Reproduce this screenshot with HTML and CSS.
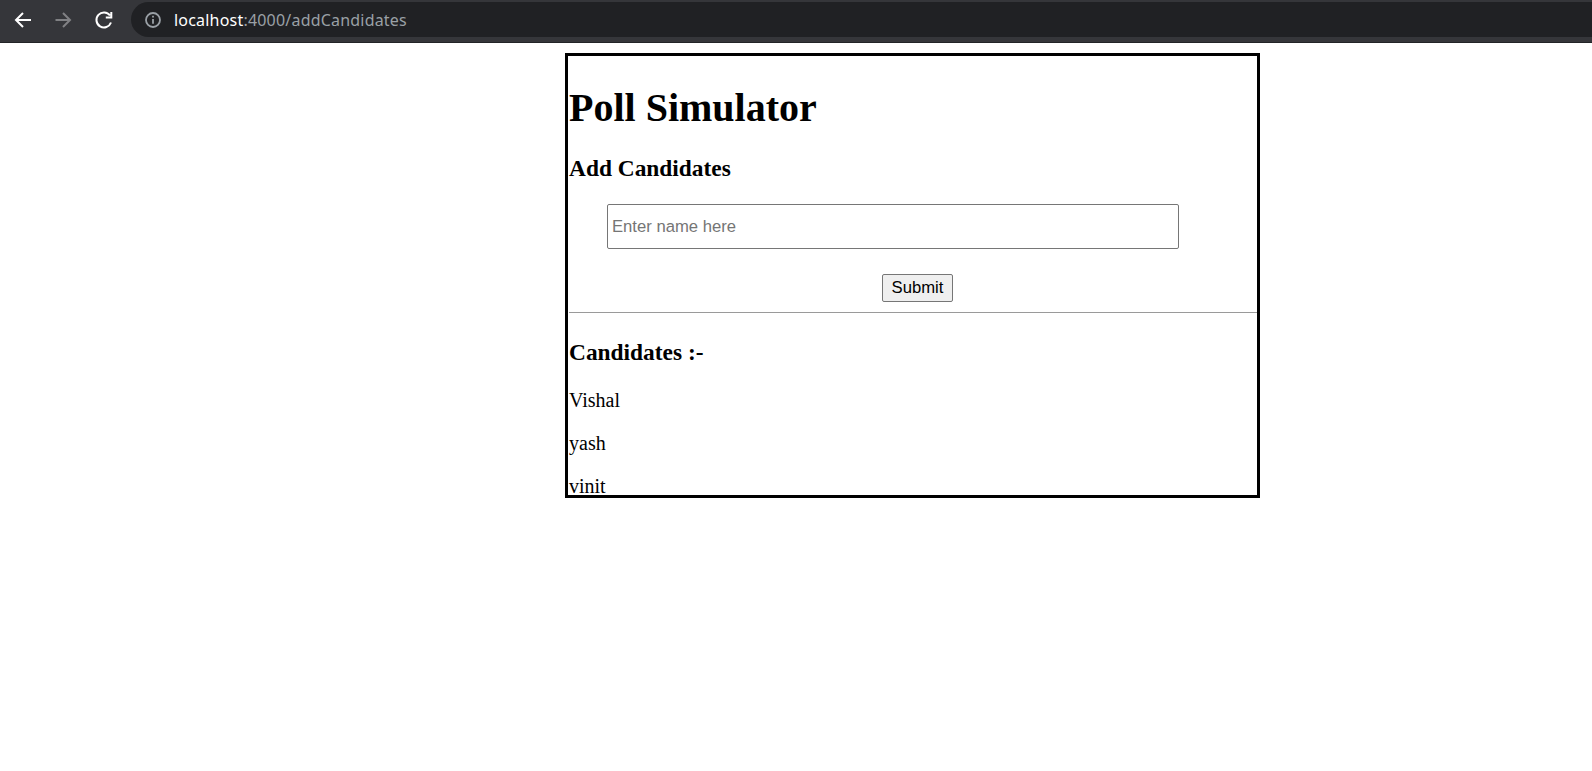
FILE: index.html
```html
<!DOCTYPE html>
<html lang="en">
<head>
    <meta charset="UTF-8">
    <title>Poll Simulator</title>
    <link rel="stylesheet" href="styles.css">
</head>
<body>

    <!-- Browser toolbar -->
    <header class="toolbar">
        <svg class="nav-icon" viewBox="0 0 20 20"><path d="M18 10H3.500M10 3 3 10l7 7"/></svg>
        <svg class="nav-icon nav-icon-off" viewBox="0 0 20 20"><path d="M2.500 10H17M10 3l7 7-7 7"/></svg>
        <svg class="nav-icon" viewBox="0 0 20 20"><path d="M18 12.500A7.500 7.500 0 1 1 17 5.500M18.300 2v5.500h-5.500"/></svg>
        <div class="omnibox">
            <svg class="info-icon" viewBox="0 0 16 16"><circle cx="8" cy="8" r="7"/><path d="M8 7v4.800M8 3.800v1.800"/></svg>
            <span class="url-host">localhost</span><span class="url-rest">:4000/addCandidates</span>
        </div>
    </header>

    <!-- Poll box -->
    <main class="poll-box">
        <h1>Poll Simulator</h1>
        <h3>Add Candidates</h3>
        <form>
            <input class="name-input" type="text" placeholder="Enter name here">
            <button class="submit-btn" type="button">Submit</button>
        </form>
        <hr>
        <h3 class="list-title">Candidates :-</h3>
        <p>Vishal</p>
        <p>yash</p>
        <p>vinit</p>
    </main>

</body>
</html>
```

FILE: styles.css
```css
body {
    margin: 0;
    font-family: "Liberation Serif", serif;
    background-color: #fff;
    color: #000;
}

/* Browser toolbar */
.toolbar {
    display: flex;
    align-items: center;
    height: 43px;
    box-sizing: border-box;
    padding: 2px 0 5px 13px;
    background-color: #35363a;
    border-bottom: 1px solid #232427;
}

.nav-icon {
    width: 20px;
    height: 20px;
    margin-right: 20px;
    fill: none;
    stroke: #fff;
    stroke-width: 2;
}

.nav-icon-off {
    stroke: #808184;
}

.omnibox {
    flex: 1;
    display: flex;
    align-items: center;
    height: 35px;
    margin-left: -2px;
    padding-left: 14px;
    background-color: #202124;
    border-radius: 18px 0 0 18px;
    font-family: "Noto Sans", sans-serif;
    font-size: 16px;
    letter-spacing: 0.2px;
}

.info-icon {
    width: 16px;
    height: 16px;
    margin-right: 13px;
    fill: none;
    stroke: #9aa0a6;
    stroke-width: 1.8;
}

.url-host {
    color: #fff;
}

.url-rest {
    color: #9aa0a6;
}

/* Poll box */
.poll-box {
    width: 688px;
    height: 439px;
    margin: 10px 0 0 565px;
    padding-left: 1px;
    border: 3px solid #000;
    overflow: hidden;
}

h1 {
    font-size: 40px;
    margin: 28px 0 24px;
}

h3 {
    font-size: 23.4px;
    margin: 22px 0;
}

.list-title {
    margin-bottom: 23px;
}

.name-input {
    display: block;
    box-sizing: border-box;
    width: 572px;
    height: 45px;
    margin-left: 38px;
    padding: 0 4px;
    border: 1px solid #767676;
    border-radius: 2px;
    font-family: "Liberation Sans", sans-serif;
    font-size: 16.67px;
}

.name-input::placeholder {
    color: #757575;
}

.submit-btn {
    display: block;
    box-sizing: border-box;
    width: 71px;
    height: 28px;
    margin: 25px 0 0 313px;
    padding: 0;
    background-color: #efefef;
    border: 1px solid #767676;
    border-radius: 2px;
    font-family: "Liberation Sans", sans-serif;
    font-size: 16.67px;
    color: #000;
}

hr {
    margin: 10px 0 26px;
    border: 0;
    border-top: 1px solid #9a9a9a;
}

p {
    font-size: 20px;
    margin: 20px 0;
}
```
